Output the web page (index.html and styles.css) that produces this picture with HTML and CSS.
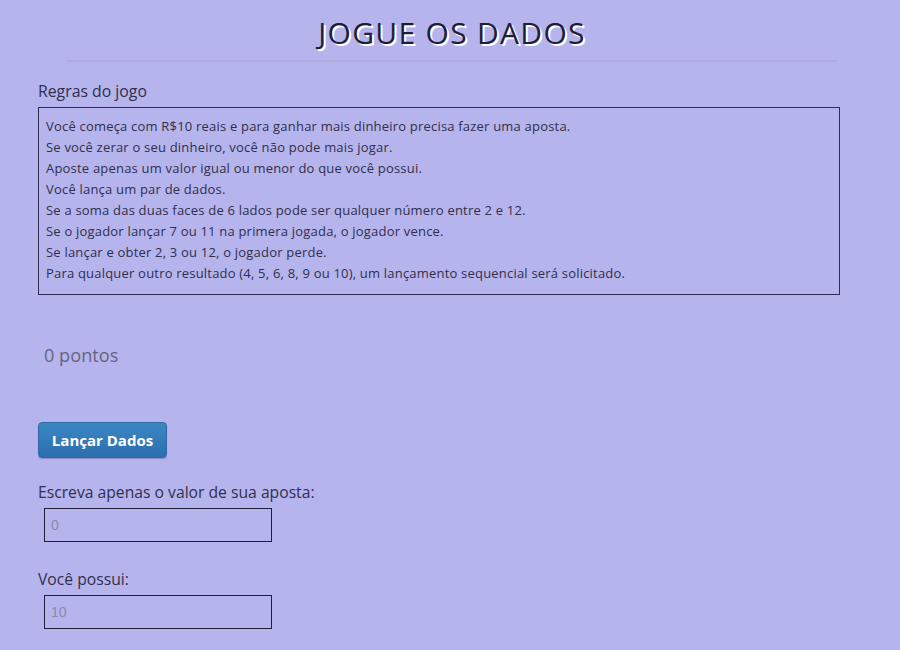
FILE: index.html
```html
<!DOCTYPE html>
<html lang="pt">
<head>
<meta charset="utf-8">
<title>Jogue os dados</title>
<link rel="stylesheet" href="styles.css">
</head>
<body>
<div class="page">
  <h1 class="title">JOGUE OS DADOS</h1>
  <hr class="rule">
  <div class="rules-label">Regras do jogo</div>
  <div class="rules-box">
    <p>Você começa com R$10 reais e para ganhar mais dinheiro precisa fazer uma aposta.</p>
    <p>Se você zerar o seu dinheiro, você não pode mais jogar.</p>
    <p>Aposte apenas um valor igual ou menor do que você possui.</p>
    <p>Você lança um par de dados.</p>
    <p>Se a soma das duas faces de 6 lados pode ser qualquer número entre 2 e 12.</p>
    <p>Se o jogador lançar 7 ou 11 na primera jogada, o jogador vence.</p>
    <p>Se lançar e obter 2, 3 ou 12, o jogador perde.</p>
    <p>Para qualquer outro resultado (4, 5, 6, 8, 9 ou 10), um lançamento sequencial será solicitado.</p>
  </div>
  <div class="points">0 pontos</div>
  <button class="btn">Lançar Dados</button>
  <label class="field-label">Escreva apenas o valor de sua aposta:</label>
  <input class="field" type="text" placeholder="0">
  <label class="field-label second">Você possui:</label>
  <input class="field" type="text" placeholder="10">
</div>
</body>
</html>
```
FILE: styles.css
```css
html, body {
  margin: 0;
  padding: 0;
  background: #b6b4ed;
}
body {
  font-family: "Open Sans", "DejaVu Sans", sans-serif;
  color: #302f4c;
}
.page {
  width: 802px;
  margin-left: 38px;
  display: flex;
  flex-direction: column;
  align-items: flex-start;
}
.title {
  align-self: center;
  margin: 14px 0 0 26px;
  font-size: 30px;
  font-weight: 500;
  line-height: 38px;
  color: #1f1e38;
  text-shadow: 2px 2px 0 #ffffff;
  letter-spacing: 1.3px;
}
.rule {
  align-self: stretch;
  margin: 8px 3px 0 28px;
  border: 0;
  border-top: 2px solid #adabe0;
  height: 0;
}
.rules-label {
  margin-top: 19px;
  font-size: 15.8px;
  line-height: 20px;
  color: #302f4c;
}
.rules-box {
  box-sizing: border-box;
  align-self: stretch;
  margin-top: 6px;
  height: 188px;
  border: 1px solid #2d2b52;
  padding: 8px 7px;
}
.rules-box p {
  margin: 0;
  font-size: 13px;
  line-height: 21px;
  color: #302f4c;
  letter-spacing: 0.2px;
}
.points {
  margin: 49px 0 0 6px;
  font-size: 18.2px;
  line-height: 22px;
  color: #66657e;
}
.btn {
  margin-top: 56px;
  width: 129px;
  height: 36px;
  border: 1px solid #2d6aa3;
  border-radius: 4px;
  background: linear-gradient(#3d87c4, #2b6ead);
  color: #ffffff;
  font-family: inherit;
  font-size: 15px;
  font-weight: 700;
  padding: 0;
  box-shadow: 0 1px 1px rgba(40, 40, 90, 0.3);
}
.field-label {
  margin-top: 24px;
  font-size: 15.7px;
  line-height: 20px;
  color: #302f4c;
}
.field-label.second {
  margin-top: 27px;
}
.field {
  box-sizing: border-box;
  margin: 6px 0 0 6px;
  width: 228px;
  height: 34px;
  border: 1.5px solid #1f1e38;
  background: transparent;
  padding: 0 6px;
  font-family: "Liberation Sans", Arial, sans-serif;
  font-size: 14px;
  color: #302f4c;
  outline: none;
}
.field::placeholder {
  color: #8c8aa8;
}
```
